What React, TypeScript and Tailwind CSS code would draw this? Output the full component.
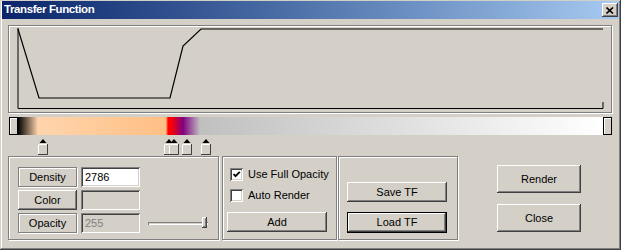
import React from 'react';

const raised = "bg-[#d4d0c8] shadow-[inset_-1px_-1px_#404040,inset_1px_1px_#ffffff,inset_-2px_-2px_#808080]";
const etched = "border border-[#808080] shadow-[inset_1px_1px_#ffffff,1px_1px_#ffffff]";
const sunken = "shadow-[inset_1px_1px_#808080,inset_-1px_-1px_#ffffff,inset_2px_2px_#404040,inset_-2px_-2px_#d4d0c8]";

// marker centres along the colour bar (page x)
const markers = [43, 169, 174, 187, 206];

function Marker({ x }: { x: number }) {
  return (
    <svg
      className="absolute top-0"
      style={{ left: x - 9 - 5 }}
      width="10"
      height="16"
      viewBox="0 0 10 16"
    >
      <polygon points="5,0 8.5,4 1.5,4" fill="#000" />
      <rect x="0.5" y="5.5" width="9" height="10" fill="#d4d0c8" stroke="#808080" />
      <path d="M0.5 15 V5.5 H9" stroke="#fff" fill="none" />
      <path d="M9.5 5 V15.5 H0" stroke="#404040" fill="none" />
    </svg>
  );
}

function Btn({ label, className = '' }: { label: string; className?: string }) {
  return (
    <div className={`${raised} flex items-center justify-center text-black ${className}`}>{label}</div>
  );
}

function Check({ checked, label }: { checked: boolean; label: string }) {
  return (
    <div className="flex items-center gap-[5px] h-[13px]">
      <div className={`w-[13px] h-[13px] bg-white ${sunken} flex items-center justify-center`}>
        {checked && (
          <svg width="9" height="9" viewBox="0 0 9 9">
            <polyline points="1.5,4 3.5,6.2 7.8,1.8" fill="none" stroke="#000" strokeWidth="1.8" />
          </svg>
        )}
      </div>
      <span className="leading-none">{label}</span>
    </div>
  );
}

export default function App() {
  return (
    <div className="w-[621px] h-[250px] bg-[#d4d0c8] font-['Liberation_Sans',Arial,sans-serif] text-[11px] text-black shadow-[inset_-1px_-1px_#404040,inset_1px_1px_#d4d0c8,inset_-2px_-2px_#808080,inset_2px_2px_#ffffff] pt-[1px] px-[2px] flex flex-col overflow-hidden">
      {/* Title bar */}
      <div className="h-[18px] bg-gradient-to-r from-[#0a246a] to-[#a6caf0] flex items-center justify-between pl-[2px] pr-[1px]">
        <span className="text-white font-bold text-[11.5px] leading-none tracking-[-0.4px]">Transfer Function</span>
        <div className={`${raised} w-[16px] h-[14px] flex items-center justify-center`}>
          <svg width="8" height="7" viewBox="0 0 8 7">
            <path d="M0.5 0.5 L7 6.5 M7 0.5 L0.5 6.5" stroke="#000" strokeWidth="1.6" />
          </svg>
        </div>
      </div>

      {/* Opacity graph */}
      <div className={`${etched} ml-[6px] mt-[6px] w-[604px] h-[88px] relative`}>
        <svg className="absolute left-0 top-0" width="602" height="86" viewBox="0 0 602 86">
          <g transform="translate(-9,-26)" fill="none" stroke="#000" strokeWidth="1.2">
            <polyline points="18,29 39,98 170,98 183,46 201,29 603,29" />
            <path d="M18 28 V108.5 H603 M603 102 V108.5" strokeWidth="1" />
          </g>
        </svg>
      </div>

      {/* Colour bar */}
      <div className="ml-[7px] mt-[4px] w-[603px] h-[18px] relative bg-[linear-gradient(to_right,#000_9px,#ffd5ad_29px,#ffbf84_157px,#ff0000_159px,#ff0000_162px,#800080_174px,#c0c0c0_191px,#ffffff_594px)]">
        <div className="absolute left-0 top-0 w-[9px] h-[18px] border border-black bg-[#d4d0c8] shadow-[inset_1px_1px_#ffffff]" />
        <div className="absolute right-0 top-0 w-[9px] h-[18px] border border-black bg-[#d4d0c8] shadow-[inset_1px_1px_#ffffff]" />
      </div>

      {/* Markers */}
      <div className="ml-[7px] mt-[4px] h-[16px] w-[603px] relative">
        {markers.map((m, i) => (
          <Marker key={i} x={m} />
        ))}
      </div>

      {/* Bottom controls */}
      <div className="flex items-start ml-[6px] mt-[1px]">
        {/* Panel 1 */}
        <div className={`${etched} w-[211px] h-[84px] flex pl-[9px] pt-[10px]`}>
          <div className="flex flex-col gap-[3px] w-[59px]">
            <div className={`${etched} h-[20px] flex items-center justify-center`}>Density</div>
            <Btn label="Color" className="h-[20px]" />
            <div className={`${etched} h-[20px] flex items-center justify-center`}>Opacity</div>
          </div>
          <div className="flex flex-col gap-[3px] w-[59px] ml-[4px]">
            <div className={`h-[20px] bg-white ${sunken} flex items-center pl-[4px]`}>2786</div>
            <div className={`h-[20px] ${sunken}`} />
            <div className={`h-[20px] ${sunken} flex items-center pl-[4px] text-[#808080]`}>255</div>
          </div>
          <div className="self-end mb-[10px] ml-[8px] w-[60px] h-[12px] relative flex items-center">
            <div className="w-full h-[3px] shadow-[inset_1px_1px_#808080,inset_-1px_-1px_#ffffff]" />
            <div className={`${raised} absolute right-[1px] top-0 w-[5px] h-[11px]`} />
          </div>
        </div>

        {/* Panel 2 */}
        <div className={`${etched} ml-[3px] w-[115px] h-[84px] flex flex-col pl-[7px] pt-[11px]`}>
          <Check checked label="Use Full Opacity" />
          <div className="mt-[8px]">
            <Check checked={false} label="Auto Render" />
          </div>
          <Btn label="Add" className="-ml-[3px] mt-[10px] w-[100px] h-[20px]" />
        </div>

        {/* Panel 3 */}
        <div className={`${etched} ml-[1px] w-[120px] h-[84px] flex flex-col pl-[8px] pt-[25px]`}>
          <Btn label="Save TF" className="w-[100px] h-[20px]" />
          <div className="mt-[10px] w-[100px] h-[21px] border border-black">
            <Btn label="Load TF" className="w-full h-full" />
          </div>
        </div>

        {/* Render / Close */}
        <div className="ml-[39px] mt-[9px] flex flex-col gap-[11px]">
          <Btn label="Render" className="w-[84px] h-[28px]" />
          <Btn label="Close" className="w-[84px] h-[28px]" />
        </div>
      </div>
    </div>
  );
}
